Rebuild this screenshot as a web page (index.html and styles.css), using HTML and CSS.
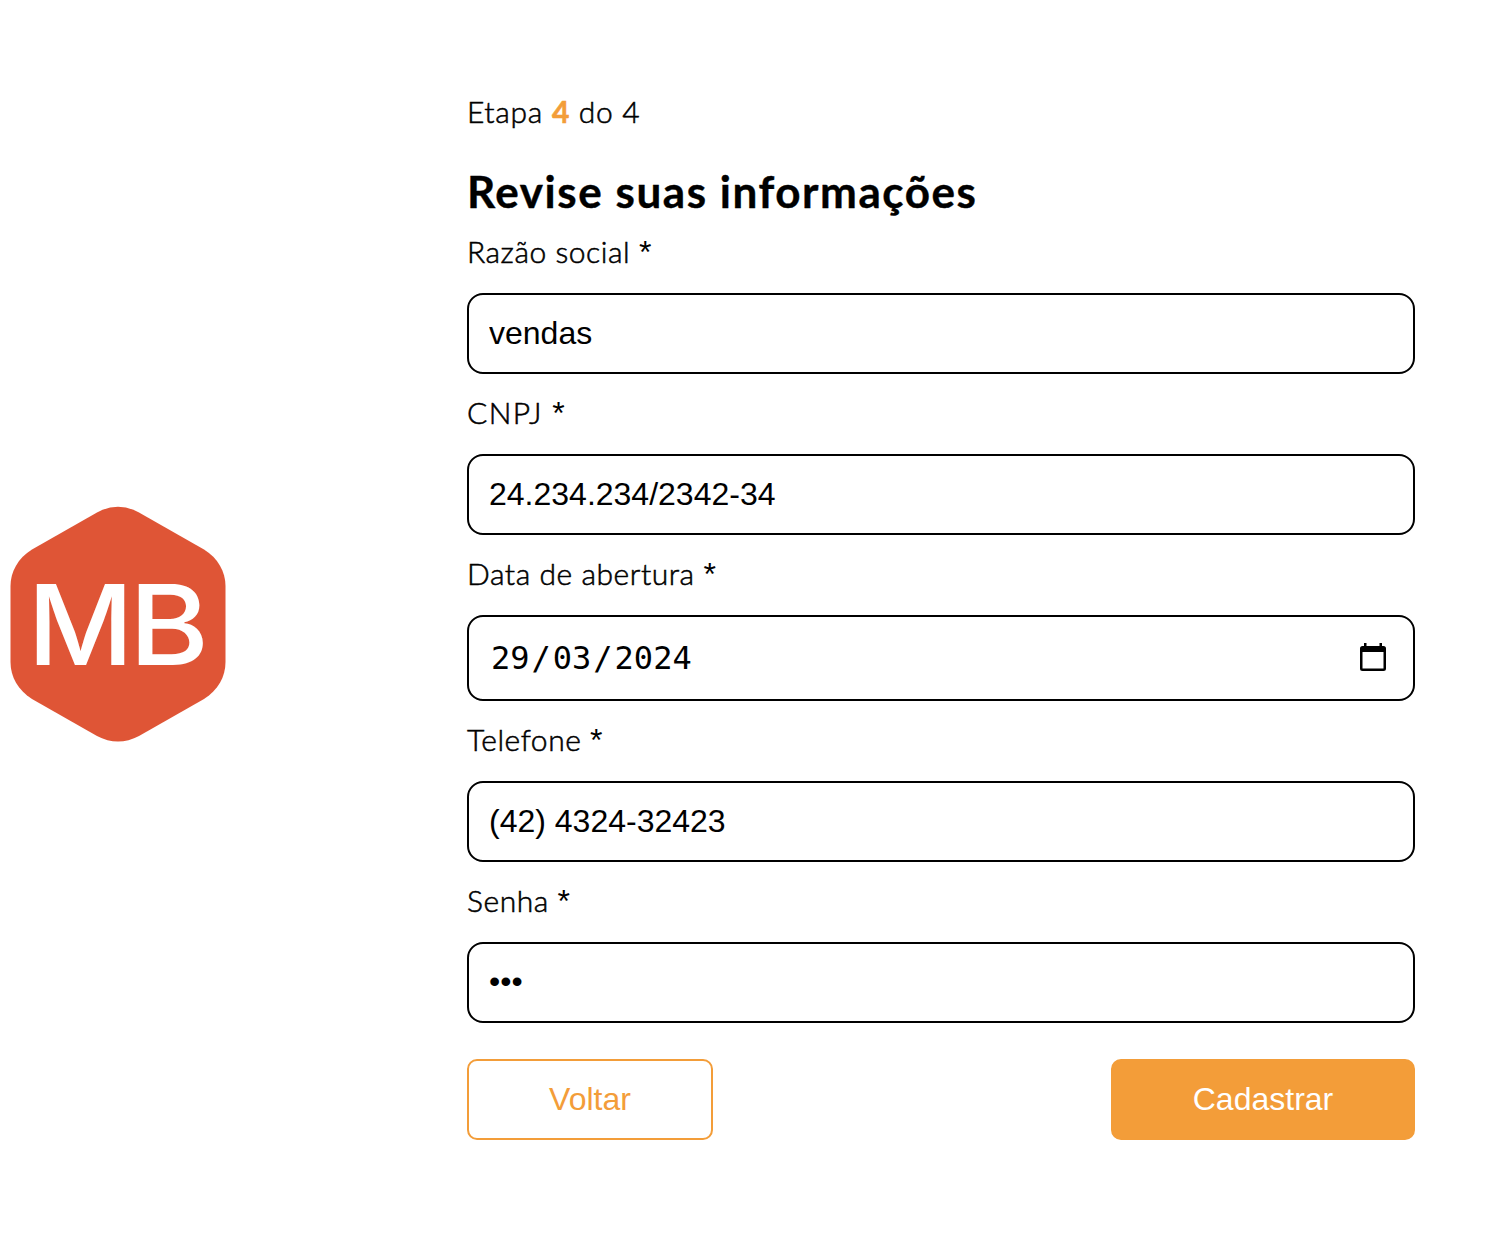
FILE: index.html
```html
<!DOCTYPE html>
<html lang="pt-BR">
<head>
<meta charset="utf-8">
<title>Cadastro</title>
<link rel="stylesheet" href="styles.css">
</head>
<body>
<main class="page">
  <svg class="logo" viewBox="0 0 216 236" role="img" aria-label="MB">
    <path class="logo-shape" d="M87 6.500Q108 -5 129 6.500L194 43.500C208 52 215.500 66 215.500 80V156C215.500 171 208 184 194 193L129 230Q108 241 87 230L22 193C8 184 .5 171 .5 156V80C.5 66 8 52 22 43.500Z"/>
    <text class="logo-text" x="17.500" y="159" textLength="106" lengthAdjust="spacingAndGlyphs">M</text>
    <text class="logo-text" x="119" y="159" textLength="80" lengthAdjust="spacingAndGlyphs">B</text>
  </svg>
  <form class="form">
    <p class="step"><span>Etapa <b class="current">4</b> do 4</span></p>
    <h1 class="title">Revise suas informações</h1>
    <div class="field">
      <label class="label" for="razao">Razão social <span class="star">*</span></label>
      <input class="input" id="razao" type="text" value="vendas">
    </div>
    <div class="field">
      <label class="label wide" for="cnpj">CNPJ <span class="star">*</span></label>
      <input class="input" id="cnpj" type="text" value="24.234.234/2342-34">
    </div>
    <div class="field">
      <span class="label">Data de abertura <span class="star">*</span></span>
      <div class="input date">
        <div class="date-value"><span class="part">29</span>/<span class="part">03</span>/<span class="part">2024</span></div>
        <svg class="calendar" viewBox="0 0 26 28" aria-hidden="true">
          <path fill-rule="evenodd" d="M4 0H6.500V3H19.500V0H22V3H23.500Q26 3 26 5.500V25.500Q26 28 23.500 28H2.500Q0 28 0 25.500V5.500Q0 3 2.500 3H4ZM2.500 9V25.500H23.500V9Z"/>
        </svg>
      </div>
    </div>
    <div class="field">
      <label class="label" for="telefone">Telefone <span class="star">*</span></label>
      <input class="input" id="telefone" type="text" value="(42) 4324-32423">
    </div>
    <div class="field">
      <label class="label" for="senha">Senha <span class="star">*</span></label>
      <input class="input password" id="senha" type="password" value="123">
    </div>
    <div class="actions">
      <button class="button back" type="button">Voltar</button>
      <button class="button submit" type="button">Cadastrar</button>
    </div>
  </form>
</main>
</body>
</html>
```
FILE: styles.css
```css
* { box-sizing: border-box; }
body {
  margin: 0;
  background: #fff;
  color: #000;
  font-family: Lato, sans-serif;
}
.page {
  display: flex;
  height: 1256px;
  padding: 89px 95px 0 10px;
  overflow: hidden;
}
.logo {
  flex: none;
  width: 216px;
  height: 236px;
  margin-top: 417px;
}
.logo-shape { fill: #df5536; }
.logo-text {
  fill: #fff;
  font: 500 112px Inter, sans-serif;
}
.form {
  width: 948px;
  margin-left: auto;
}
.step {
  height: 44px;
  margin: 0;
  font-size: 30px;
  font-weight: 300;
  line-height: 44px;
  letter-spacing: 0.7px;
  -webkit-text-stroke: 0.55px;
}
.current {
  color: #f39d39;
  font-weight: 700;
}
.title {
  height: 60px;
  margin: 28px 0 -8px;
  font-size: 44px;
  line-height: 60px;
  font-weight: 700;
  letter-spacing: 1.55px;
  -webkit-text-stroke: 0.4px;
  white-space: nowrap;
}
.label {
  display: block;
  height: 80px;
  padding-top: 16px;
  font-size: 30px;
  font-weight: 300;
  line-height: 44px;
  letter-spacing: 0.55px;
  -webkit-text-stroke: 0.55px;
  white-space: nowrap;
}
.wide { letter-spacing: 1.4px; }
.star {
  font-family: "Liberation Sans", Arial, sans-serif;
  font-size: 32px;
  line-height: 1;
  -webkit-text-stroke: 0;
}
.input {
  display: block;
  width: 100%;
  height: 81px;
  padding: 0 20px;
  border: 2px solid #000;
  border-radius: 16px;
  background: #fff;
  color: #000;
  font: 32px "Liberation Sans", Arial, sans-serif;
}
.password { padding-bottom: 3px; }
.date {
  display: flex;
  align-items: center;
  justify-content: space-between;
  height: 86px;
  padding-right: 27px;
  font-family: "DejaVu Sans Mono", monospace;
}
.date-value { white-space: nowrap; }
.part { padding: 0 2px; }
.calendar {
  width: 26px;
  height: 28px;
  margin-bottom: 2px;
}
.actions {
  display: flex;
  justify-content: space-between;
  margin-top: 36px;
}
.button {
  height: 81px;
  padding: 0;
  border: 2px solid #f39d39;
  border-radius: 10px;
  font: 32px "Liberation Sans", Arial, sans-serif;
}
.back {
  width: 246px;
  background: #fff;
  color: #f39d39;
}
.submit {
  width: 304px;
  background: #f39d39;
  color: #fff;
}
```
